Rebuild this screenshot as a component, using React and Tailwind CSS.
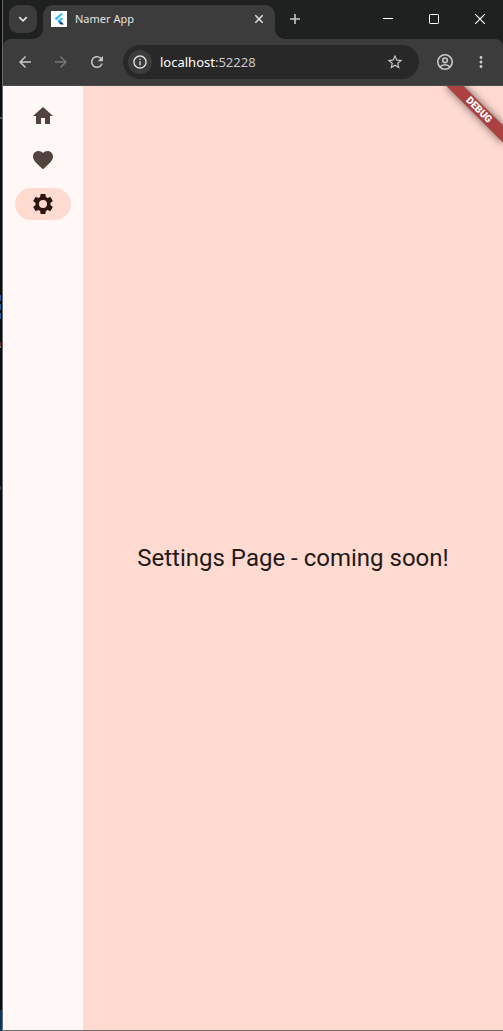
import { useState } from "react";
import {
  MdHome,
  MdFavorite,
  MdArrowBack,
  MdArrowForward,
  MdRefresh,
  MdInfoOutline,
  MdStarBorder,
  MdMoreVert,
} from "react-icons/md";

function GearIcon({ className }) {
  return (
    <svg viewBox="0 0 24 24" className={className} fill="currentColor" fillRule="evenodd" aria-hidden="true">
      <path d="M19.43 12.98c.04-.32.07-.64.07-.98s-.03-.66-.07-.98l2.110-1.650c.19-.15.24-.42.12-.64l-2-3.460c-.12-.22-.39-.3-.61-.22l-2.490 1c-.52-.4-1.080-.73-1.690-.98l-.38-2.650C14.460 2.180 14.250 2 14 2h-4c-.25 0-.46.18-.49.42l-.38 2.650c-.61.25-1.170.59-1.690.98l-2.490-1c-.23-.09-.49 0-.61.22l-2 3.460c-.13.22-.07.49.12.64l2.110 1.650c-.04.32-.07.65-.07.98s.03.66.07.98l-2.110 1.650c-.19.15-.24.42-.12.64l2 3.460c.12.22.39.3.61.22l2.490-1c.52.4 1.080.73 1.690.98l.38 2.650c.03.24.24.42.49.42h4c.25 0 .46-.18.49-.42l.38-2.650c.61-.25 1.170-.59 1.690-.98l2.490 1c.23.09.49 0 .61-.22l2-3.460c.12-.22.07-.49-.12-.64zM12 8a4 4 0 1 0 0 8 4 4 0 0 0 0-8z" />
    </svg>
  );
}

const destinations = [
  { label: "Home", Icon: MdHome },
  { label: "Favorites", Icon: MdFavorite },
  { label: "Settings", Icon: GearIcon },
];

function FlutterLogo() {
  return (
    <span className="flex size-4 shrink-0 items-center justify-center bg-white">
      <svg viewBox="0 0 16 16" className="size-4" aria-hidden="true">
        <path d="M9.600 2.500H12.600L5.400 9.400 3.600 7.600z" fill="#45b8f5" />
        <path d="M9.600 7H12.600L9.900 10.100 8.100 8.500z" fill="#45b8f5" />
        <path d="M6.300 10.200 8.100 8.400 9.900 10.200 8.100 12z" fill="#1f9cf0" />
        <path d="M8.100 12 9.900 10.200 12.600 13V13.500H9.600z" fill="#063a8c" />
      </svg>
    </span>
  );
}

function ProfileIcon() {
  return (
    <svg viewBox="0 0 18 18" className="size-[18px]" fill="none" stroke="currentColor" strokeWidth="1.6" aria-hidden="true">
      <circle cx="9" cy="9" r="7.2" />
      <circle cx="9" cy="7.3" r="2.3" />
      <path d="M4 14c1.200-1.600 3-2.300 5-2.300s3.800.700 5 2.300" />
    </svg>
  );
}

function TabStrip() {
  return (
    <div className="flex h-[39px] items-start bg-[#1f2120] text-[#e3e3e3]">
      <button aria-label="Search tabs" className="mt-[5px] ml-1.5 flex size-7 shrink-0 items-center justify-center rounded-[9px] bg-[#3c3c3c]">
        <svg viewBox="0 0 16 16" className="size-4" fill="none" stroke="currentColor" strokeWidth="1.7" aria-hidden="true">
          <path d="M4.300 6.200 8 9.900 11.700 6.200" />
        </svg>
      </button>
      <div className="relative mt-[5px] ml-1.5 flex h-[34px] w-[232px] items-center rounded-t-[10px] bg-[#3c3c3c] px-2 pb-1.5">
        <svg viewBox="0 0 10 10" className="absolute bottom-0 -left-2.5 size-2.5" aria-hidden="true">
          <path d="M10 0A10 10 0 0 1 0 10H10z" fill="#3c3c3c" />
        </svg>
        <svg viewBox="0 0 10 10" className="absolute -right-2.5 bottom-0 size-2.5" aria-hidden="true">
          <path d="M0 0A10 10 0 0 0 10 10H0z" fill="#3c3c3c" />
        </svg>
        <FlutterLogo />
        <span className="ml-2 flex-1 truncate text-[11px] leading-4">Namer App</span>
        <button aria-label="Close tab" className="flex size-4 items-center justify-center">
          <svg viewBox="0 0 16 16" className="size-4" stroke="currentColor" strokeWidth="1.5" aria-hidden="true">
            <path d="M4.300 4.300 11.700 11.700M11.700 4.300 4.300 11.700" />
          </svg>
        </button>
      </div>
      <button aria-label="New tab" className="mt-[11px] ml-3 flex size-4 shrink-0 items-center justify-center">
        <svg viewBox="0 0 16 16" className="size-4" stroke="#c7c7c7" strokeWidth="1.600" aria-hidden="true">
          <path d="M8 3V13M3 8H13" />
        </svg>
      </button>
      <div className="ml-auto flex h-[38px] shrink-0 text-white">
        <button aria-label="Minimize" className="flex w-[46px] items-center justify-center">
          <svg viewBox="0 0 10 10" className="size-2.5" stroke="currentColor" aria-hidden="true"><path d="M0 4.500H10" /></svg>
        </button>
        <button aria-label="Maximize" className="flex w-[46px] items-center justify-center">
          <svg viewBox="0 0 10 10" className="size-2.5" fill="none" stroke="currentColor" aria-hidden="true"><rect x=".5" y=".5" width="9" height="9" rx=".7" /></svg>
        </button>
        <button aria-label="Close" className="flex w-[46px] items-center justify-center">
          <svg viewBox="0 0 10 10" className="size-2.5" stroke="currentColor" strokeWidth="1.200" aria-hidden="true"><path d="M0 0 10 10M10 0 0 10" /></svg>
        </button>
      </div>
    </div>
  );
}

function Toolbar() {
  const [url, setUrl] = useState("");
  return (
    <div className="bg-[#1f2120]">
      <div className="flex h-[47px] items-center rounded-t-lg border-b border-[#4a4a4a] bg-[#3c3c3c] px-[13px] text-[#c7c7c7]">
        <button aria-label="Back"><MdArrowBack className="size-[18px]" /></button>
        <button aria-label="Forward" disabled className="ml-[18px] text-[#757575]"><MdArrowForward className="size-[18px]" /></button>
        <button aria-label="Reload" className="ml-[18px]"><MdRefresh className="size-[18px]" /></button>
        <div className="ml-[17px] flex h-[34px] min-w-0 flex-1 items-center rounded-full bg-[#282828] pr-[15px] pl-[5px]">
          <button aria-label="Site information" className="flex size-6 shrink-0 items-center justify-center rounded-full bg-[#3c3c3c] text-[#e3e3e3]">
            <MdInfoOutline className="size-4" />
          </button>
          <label className="relative ml-2 flex min-w-0 flex-1 items-center text-[13px] leading-5">
            {url === "" && (
              <span className="pointer-events-none absolute inset-x-0 text-white">
                localhost<span className="text-[#c7c7c7]">:52228</span>
              </span>
            )}
            <input
              aria-label="Address"
              value={url}
              onChange={(e) => setUrl(e.target.value)}
              className="w-full min-w-0 bg-transparent text-white outline-none"
            />
          </label>
          <button aria-label="Bookmark this tab"><MdStarBorder className="size-[18px]" /></button>
        </div>
        <button aria-label="Profile" className="ml-[17px]"><ProfileIcon /></button>
        <button aria-label="Menu" className="ml-[18px]"><MdMoreVert className="size-[18px]" /></button>
      </div>
    </div>
  );
}

function DebugBanner() {
  return (
    <div className="pointer-events-none absolute top-0 right-0 size-20 overflow-hidden">
      <div className="absolute top-[18px] left-4 flex h-3 w-20 rotate-45 items-center justify-center bg-[#ac4141] text-[10px] leading-3 font-black text-white shadow-[0_0_8px_rgba(0,0,0,0.6)]">
        DEBUG
      </div>
    </div>
  );
}

function WindowBehind() {
  return (
    <div aria-hidden="true" className="flex w-0.5 shrink-0 flex-col bg-[#0b0d0f]">
      <div className="mt-[117px] h-0.5 bg-[#55585a]" />
      <div className="mt-44 h-1.5 w-px bg-[#1f5fae]" />
      <div className="mt-[3px] h-1.5 w-px bg-[#1f5fae]" />
      <div className="mt-[3px] h-1.5 w-px bg-[#1f5fae]" />
      <div className="mt-[23px] h-1 w-px bg-[#7a1f2c]" />
      <div className="h-0.5 w-px bg-[#7d7a5c]" />
      <div className="mt-[138px] h-1 w-px bg-[#2c4a5a]" />
      <div className="mt-auto h-[21px] bg-[#003a6b]" />
    </div>
  );
}

export default function App() {
  const [selected, setSelected] = useState(2);
  return (
    <div className="flex min-h-screen font-['Noto_Sans',sans-serif]">
      <WindowBehind />
      <div className="flex min-w-0 flex-1 flex-col border-b border-l border-[#6b6b6b]">
        <TabStrip />
        <Toolbar />
        <div className="relative flex flex-1 font-[Roboto,sans-serif]">
          <nav aria-label="Main" className="flex w-20 shrink-0 flex-col items-center gap-3 bg-[#fff8f6] pt-3.5">
            {destinations.map(({ label, Icon }, i) => (
              <button
                key={label}
                aria-label={label}
                aria-current={i === selected ? "page" : undefined}
                onClick={() => setSelected(i)}
                className={
                  i === selected
                    ? "flex h-8 w-14 items-center justify-center rounded-full bg-[#ffdad1] text-[#2b1610]"
                    : "flex h-8 w-14 items-center justify-center rounded-full text-[#53433f]"
                }
              >
                <Icon className="size-6" />
              </button>
            ))}
          </nav>
          <main className="flex min-w-0 flex-1 items-center justify-center bg-[#ffdad1] text-center text-[#231917]">
            <p className="text-2xl">Settings Page - coming soon!</p>
          </main>
          <DebugBanner />
        </div>
      </div>
    </div>
  );
}
